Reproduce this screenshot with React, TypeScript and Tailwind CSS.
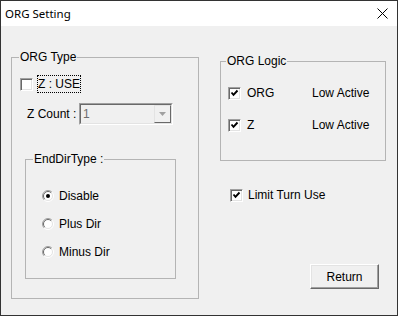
import React from "react";

function CheckBox({ checked }: { checked?: boolean }) {
  return (
    <span className="w-[13px] h-[13px] shrink-0 bg-white border border-t-[#a0a0a0] border-l-[#a0a0a0] border-b-white border-r-white shadow-[inset_1px_1px_0_#696969,inset_-1px_-1px_0_#e3e3e3] flex items-center justify-center">
      {checked && (
        <svg width="11" height="11" viewBox="0 0 11 11">
          <path d="M2.5 4.5 L4.5 6.8 L8.5 2.5" stroke="#000" strokeWidth="1.9" fill="none" />
        </svg>
      )}
    </span>
  );
}

function Radio({ checked }: { checked?: boolean }) {
  return (
    <svg width="12" height="12" viewBox="0 0 12 12" className="shrink-0">
      <circle cx="6" cy="6" r="5" fill="#fff" />
      <path d="M2.1 9.9 A5.5 5.5 0 0 1 9.9 2.1" stroke="#a0a0a0" fill="none" />
      <path d="M9.9 2.1 A5.5 5.5 0 0 1 2.1 9.9" stroke="#fff" fill="none" />
      <path d="M2.8 9.2 A4.5 4.5 0 0 1 9.2 2.8" stroke="#696969" fill="none" />
      <path d="M9.2 2.8 A4.5 4.5 0 0 1 2.8 9.2" stroke="#e3e3e3" fill="none" />
      {checked && <circle cx="6" cy="6" r="2" fill="#000" />}
    </svg>
  );
}

export default function App() {
  return (
    <div className="w-[398px] h-[316px] border border-[#333] flex flex-col bg-[#f0f0f0] font-['Liberation_Sans',Arial,sans-serif] text-[12px] leading-[14px] text-black">
      <div className="h-[25px] bg-white flex items-center justify-between pl-[4px] pr-[9px] shrink-0">
        <span className="font-['Noto_Sans',sans-serif] text-[11.5px]">ORG Setting</span>
        <svg width="11" height="11" viewBox="0 0 11 11">
          <path d="M0.5 0.5 L10.5 10.5 M10.5 0.5 L0.5 10.5" stroke="#000" strokeWidth="1" />
        </svg>
      </div>

      <div className="flex items-start">
        {/* ORG Type */}
        <fieldset className="ml-[10px] mt-[24px] w-[188px] border border-[#b4b4b4] pb-[19px]">
          <legend className="ml-[7px] px-[1px]">ORG Type</legend>
          <div className="flex items-center mt-[11px] ml-[8px] h-[18px]">
            <CheckBox />
            <span className="ml-[4px] border border-dotted border-black leading-[16px]">Z : USE</span>
          </div>
          <div className="flex items-center mt-[10px]">
            <span className="ml-[15px] w-[52px]">Z Count :</span>
            <div className="w-[94px] h-[22px] border border-t-[#a0a0a0] border-l-[#a0a0a0] border-b-white border-r-white flex">
              <div className="flex-1 flex border border-t-[#696969] border-l-[#696969] border-b-[#e3e3e3] border-r-[#e3e3e3]">
                <span className="flex-1 pl-[2px] pt-[2px] text-[#6d6d6d]">1</span>
                <div className="w-[17px] border border-t-[#e3e3e3] border-l-[#e3e3e3] border-b-[#696969] border-r-[#696969] bg-[#f0f0f0] flex items-center justify-center">
                  <svg width="7" height="4" viewBox="0 0 7 4">
                    <path d="M0 0 L7 0 L3.5 4 Z" fill="#a0a0a0" />
                  </svg>
                </div>
              </div>
            </div>
          </div>

          {/* EndDirType */}
          <fieldset className="ml-[13px] mt-[27px] w-[151px] border border-[#b4b4b4] pb-[19px]">
            <legend className="ml-[7px] px-[1px]">EndDirType :</legend>
            <div className="flex flex-col gap-[14px] mt-[23px] ml-[16px]">
              <div className="flex items-center gap-[5px] h-[14px]">
                <Radio checked />
                <span>Disable</span>
              </div>
              <div className="flex items-center gap-[5px] h-[14px]">
                <Radio />
                <span>Plus Dir</span>
              </div>
              <div className="flex items-center gap-[5px] h-[14px]">
                <Radio />
                <span>Minus Dir</span>
              </div>
            </div>
          </fieldset>
        </fieldset>

        <div className="flex flex-col ml-[21px]">
          {/* ORG Logic */}
          <fieldset className="mt-[28px] w-[166px] border border-[#b4b4b4] pb-[28px]">
            <legend className="ml-[5px] px-[1px]">ORG Logic</legend>
            <div className="flex flex-col gap-[18px] mt-[18px] ml-[7px]">
              <div className="flex items-center h-[14px]">
                <CheckBox checked />
                <span className="ml-[6px] w-[65px]">ORG</span>
                <span>Low Active</span>
              </div>
              <div className="flex items-center h-[14px]">
                <CheckBox checked />
                <span className="ml-[6px] w-[65px]">Z</span>
                <span>Low Active</span>
              </div>
            </div>
          </fieldset>

          <div className="flex items-center h-[14px] mt-[27px] ml-[10px]">
            <CheckBox checked />
            <span className="ml-[5px]">Limit Turn Use</span>
          </div>

          <button className="self-start ml-[90px] mt-[62px] w-[69px] h-[25px] bg-[#f0f0f0] border border-t-white border-l-white border-b-[#696969] border-r-[#696969] shadow-[inset_-1px_-1px_0_#a0a0a0,inset_1px_1px_0_#e3e3e3] flex items-center justify-center">
            Return
          </button>
        </div>
      </div>
    </div>
  );
}
